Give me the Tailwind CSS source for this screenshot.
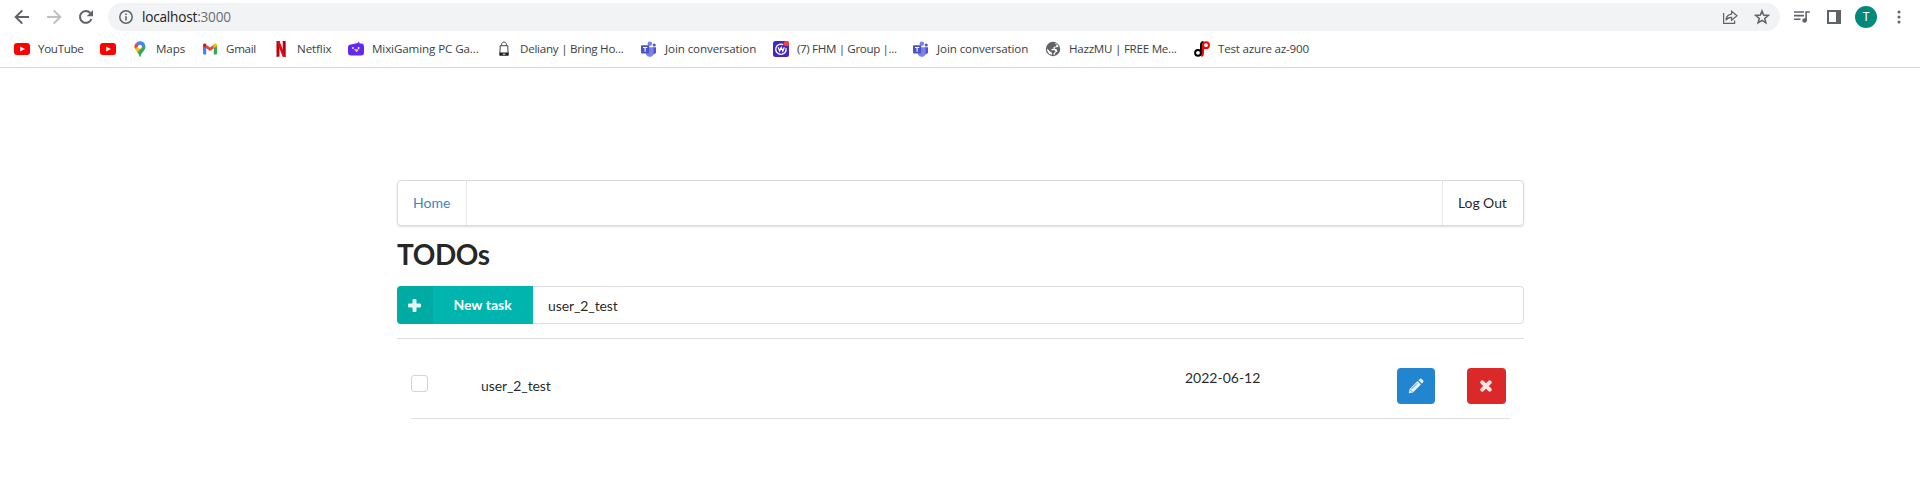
<!DOCTYPE html>
<html lang="en">
<head>
<meta charset="utf-8">
<title>TODOs</title>
<script src="https://cdn.jsdelivr.net/npm/@tailwindcss/browser@4"></script>
</head>
<body class="bg-white h-[477px] overflow-hidden font-['Lato',sans-serif] text-[14px] text-black/87">
<svg class="hidden">
  <symbol id="yt" viewBox="0 0 16 16"><rect y="2" width="16" height="12" rx="3" fill="#f00"/><path d="M6.2 5.4v5.2L11 8z" fill="#fff"/></symbol>
  <symbol id="teams" viewBox="0 0 16 16"><circle cx="13.2" cy="4" r="1.6" fill="#5059c9"/><path d="M11.5 6.3h3.5v5a2.4 2.4 0 0 1-3.5 1.6z" fill="#5059c9"/><circle cx="8.8" cy="2.8" r="2.3" fill="#7b83eb"/><path d="M5 6.3h7.6v5.2a4 4 0 0 1-7.6 2z" fill="#7b83eb"/><rect y="4.2" width="8.2" height="8.2" rx=".8" fill="#4b53bc"/><path d="M2 6.5h4.3M4.1 6.5v4.3" stroke="#fff" stroke-width="1.1"/></symbol>
</svg>

<header class="h-[68px] border-b border-[#d9dadc] font-['Open_Sans',sans-serif] text-[#3c4043]">
  <div class="flex items-center h-[31px] pt-[3px]">
    <svg class="ml-[14px] size-4" viewBox="0 0 16 16" fill="none" stroke="#5f6368" stroke-width="2"><path d="M15 8H2M8.3 1.4 1.7 8l6.6 6.6"/></svg>
    <svg class="ml-4 size-4" viewBox="0 0 16 16" fill="none" stroke="#bdbfc2" stroke-width="2"><path d="M1 8h13M7.7 1.4 14.3 8l-6.6 6.6"/></svg>
    <svg class="ml-4 size-4" viewBox="0 0 16 16"><path d="M13.4 10A5.9 5.9 0 1 1 12.3 4" fill="none" stroke="#5f6368" stroke-width="2"/><path d="M15 1v6.3H8.7z" fill="#5f6368"/></svg>
    <div class="ml-[14px] w-[1672px] h-7 rounded-full bg-[#f1f3f4] flex items-center">
      <svg class="ml-[11px] size-[14px]" viewBox="0 0 14 14" fill="none" stroke="#5f6368"><circle cx="7" cy="7" r="6.2" stroke-width="1.5"/><path d="M7 6.2v4.2M7 3.4v1.6" stroke-width="1.6"/></svg>
      <span class="ml-[9px] w-[90px] whitespace-nowrap text-[13.6px] tracking-[-0.2px] text-[#202124]">localhost<span class="text-[#6b6f74]">:3000</span></span>
      <svg class="ml-auto size-4" viewBox="0 0 16 16" fill="none" stroke="#5f6368" stroke-width="1.2"><path d="M1.6 4v10.4h11V11.5M9.6 5.1V2.2L15 6.8l-5.4 4.4V8.3C6.8 8.3 5 9.3 3.9 11.2c.3-3.5 2.2-5.6 5.7-6.1z"/></svg>
      <svg class="ml-4 mr-[10px] size-4" viewBox="0 0 16 16" fill="none" stroke="#5f6368" stroke-width="1.5"><path d="m8 2 1.6 4.1 4.7.3-3.6 3 1.2 4.5L8 11.4l-3.9 2.5 1.2-4.5-3.6-3 4.7-.3z"/></svg>
    </div>
    <svg class="ml-[14px] w-4 h-4" viewBox="0 0 16 16" fill="none" stroke="#5f6368" stroke-width="1.6"><path d="M0 3h10M0 6.6h10M0 10.3h6.5M12.1 12V3h3.7"/><circle cx="10.6" cy="11.5" r="2.3" fill="#5f6368" stroke="none"/></svg>
    <svg class="ml-[17px] w-[14px] h-[14px]" viewBox="0 0 14 14"><path d="M0 0h14v14H0zM2 2v10h7V2z" fill="#5f6368" fill-rule="evenodd"/></svg>
    <div class="ml-[14px] size-[22px] rounded-full bg-[#00897b] text-white text-[12px] flex items-center justify-center font-['Roboto',sans-serif]">T</div>
    <svg class="ml-[20px] w-1 h-[14px]" viewBox="0 0 4 14" fill="#5f6368"><circle cx="2" cy="2" r="1.5"/><circle cx="2" cy="7" r="1.5"/><circle cx="2" cy="12" r="1.5"/></svg>
  </div>
  <nav class="flex items-center h-[36px] pl-[14px] text-[11.6px] tracking-[-0.1px] whitespace-nowrap">
    <a class="flex items-center gap-2 w-[86px] tracking-[-0.3px]"><svg class="size-4"><use href="#yt"/></svg><span>YouTube</span></a>
    <a class="flex items-center w-8"><svg class="size-4"><use href="#yt"/></svg></a>
    <a class="flex items-center gap-2 w-[70px]"><svg class="size-4" viewBox="0 0 16 16"><path d="M8 .3a5.4 5.4 0 0 0-4.2 2L8 5.8l3.4-4.3A5.4 5.4 0 0 0 8 .3z" fill="#4285f4"/><path d="M3.8 2.3a5.3 5.3 0 0 0-.7 5.8L7 4.8z" fill="#ea4335"/><path d="M11.4 1.5 3.1 8.1c.5 1.2 1.4 2 2.2 3.2L13 3.7a5.4 5.4 0 0 0-1.6-2.2z" fill="#fbbc04"/><path d="M13 3.6 5.3 11.3C6.5 12.8 7 14 7.5 15.4q.5 1 1 0c.8-3 2.5-4.3 3.9-6.3 1.3-1.8 1.3-3.7.6-5.5z" fill="#34a853"/><path d="M8 .3c2 0 4 1 5 3.3L9.6 7 6.4 4.4 9.8.6z" fill="#4285f4"/><circle cx="8" cy="5.7" r="2" fill="#fff"/></svg><span>Maps</span></a>
    <a class="flex items-center gap-2 w-[71px] tracking-[-0.3px]"><svg class="size-4" viewBox="0 0 16 16"><path d="M1 4v8.5a1 1 0 0 0 1 1h2.2V6.6z" fill="#4285f4"/><path d="M15 4v8.5a1 1 0 0 1-1 1h-2.2V6.6z" fill="#34a853"/><path d="M4.2 7.2V3.7L8 6.6l3.8-2.9v3.5L8 10z" fill="#ea4335"/><path d="M1 5V4c0-1.6 1.7-2 2.6-1.2l.6.5v4z" fill="#c5221f"/><path d="M15 5V4c0-1.6-1.7-2-2.6-1.2l-.6.5v4z" fill="#fbbc04"/></svg><span>Gmail</span></a>
    <a class="flex items-center gap-2 w-[75px]"><svg class="size-4" viewBox="0 0 16 16"><path d="M3.5 0h3v15.6l-3 .4zM9.7 0h3v16l-3-.4z" fill="#b1060f"/><path d="M3.5 0h3l6.2 16-3.1-.4z" fill="#e50914"/></svg><span>Netflix</span></a>
    <a class="flex items-center gap-2 w-[148px]"><svg class="size-4" viewBox="0 0 16 16"><path d="M3 3.5 9.5 2 11 .5l.6 2H14q2 .5 2 3v6q0 3-3 3H3q-3 0-3-3v-5q0-3 3-3z" fill="#6229f5"/><circle cx="5" cy="7" r=".9" fill="#fff"/><circle cx="10.6" cy="7" r=".9" fill="#fff"/><path d="M5.8 8.5 8 8l3 .7-2.4 2.6z" fill="#ffc928"/></svg><span>MixiGaming PC Ga...</span></a>
    <a class="flex items-center gap-2 w-[145px] tracking-[-0.25px]"><svg class="size-4" viewBox="0 0 16 16"><path d="M5.6 5V3.5C5.6.2 10.4.2 10.4 3.5V5" fill="none" stroke="#444"/><path d="M4.2 4.7h7.6l.3 9H3.9z" fill="#fff" stroke="#444"/><path d="M3.5 11.6h9l.1 3.2H3.4z" fill="#222"/><path d="M6.8 13.2h2.5" stroke="#fff"/></svg><span>Deliany | Bring Ho...</span></a>
    <a class="flex items-center gap-2 w-[132px]"><svg class="size-4"><use href="#teams"/></svg><span>Join conversation</span></a>
    <a class="flex items-center gap-2 w-[140px] tracking-[-0.35px]"><svg class="size-4" viewBox="0 0 16 16"><rect width="16" height="16" rx="2.5" fill="#4326c4"/><path d="M10.2 3.6A5.2 5.2 0 1 0 13 7.2M9 13q3.5-.2 4.1-4" fill="none" stroke="#fff" stroke-width="1.3"/><path d="m5.2 6.3 1.4 3.8L8.2 6.5l1.6 3.6 1.5-3.8" fill="none" stroke="#fff" stroke-width="1.2"/><circle cx="13.4" cy="2.6" r="2.7" fill="#fa3e3e"/></svg><span>(7) FHM | Group |...</span></a>
    <a class="flex items-center gap-2 w-[132px]"><svg class="size-4"><use href="#teams"/></svg><span>Join conversation</span></a>
    <a class="flex items-center gap-2 w-[149px] tracking-[-0.25px]"><svg class="size-4" viewBox="0 0 16 16"><circle cx="8" cy="8" r="7.2" fill="#5f6368"/><path d="M9.3 2.4 12 3.6 10.8 5.4 8.6 6v1.8L6.4 8v1.3h3.2l.8 1.5-1.8 1.4v1.9l-1.5-.3-.2-2.1-2.1-1.4L2.1 7.5l.1 2.2 2 3.2 3.5 1.2 1.9-.3 1-2.4 1.9-1-1-2.2-2.1-.6.7-1.2 3.4-.5-.6-1.9-1.7-1.7z" fill="#fff"/></svg><span>HazzMU | FREE Me...</span></a>
    <a class="flex items-center gap-2 tracking-[-0.2px]"><svg class="size-4" viewBox="0 0 16 16" fill="none" stroke-width="2"><circle cx="4" cy="11.8" r="2.9" stroke="#000"/><path d="M7 14.5V4q.1-2.8 2.5-3" stroke="#000"/><circle cx="12" cy="4.2" r="2.9" stroke="#f00"/><path d="M9 4v8.5q0 2-1.7 2.5" stroke="#f00"/></svg><span>Test azure az-900</span></a>
  </nav>
</header>

<main class="ml-[397px] w-[1127px] pt-[112px]">
  <nav class="flex h-[46px] rounded-[4px] border border-[#d9dadb] shadow-[0_1px_2px_0_rgba(34,36,38,0.15)]">
    <a class="flex items-center w-[69px] pl-[15px] pb-[2px] border-r border-[#e6e6e7] text-[#4183c4]">Home</a>
    <a class="ml-auto flex items-center w-[81px] pl-[15px] pb-[2px] border-l border-[#e6e6e7] tracking-[-0.08px]">Log Out</a>
  </nav>
  <h1 class="mt-[10px] h-9 leading-9 text-[28px] font-bold tracking-[-0.4px]">TODOs</h1>
  <div class="mt-[14px] flex h-[38px]">
    <button class="flex w-[136px] rounded-l-[4px] overflow-hidden bg-[#00b5ad] text-white font-bold">
      <span class="flex items-center justify-center w-9 h-full pr-px bg-black/5"><svg class="w-[13px] h-[13px]" viewBox="0 0 13 13"><path d="M4.5 1q0-1 1-1h2q1 0 1 1v3.5H12q1 0 1 1v2q0 1-1 1H8.5V12q0 1-1 1h-2q-1 0-1-1V8.5H1q-1 0-1-1v-2q0-1 1-1h3.500z" fill="#fff" fill-opacity=".88"/></svg></span>
      <span class="flex-1 self-center pb-[2px] pr-px">New task</span>
    </button>
    <div class="flex-1 flex items-center pl-[15px] border border-l-0 border-[#dededf] rounded-r-[4px] pt-px tracking-[-0.1px]">user_2_test</div>
  </div>
  <div class="mt-[14px] border-t border-[#dedede]"></div>
  <div class="mx-[14px] h-[80px] flex items-start border-b border-[#dedede]">
    <span class="mt-[36px] size-[17px] rounded-[3px] border border-[#d4d4d5]"></span>
    <span class="ml-[53px] mt-[37px] leading-5 w-[704px] tracking-[-0.1px]">user_2_test</span>
    <span class="mt-[29px] leading-5 w-[212px]">2022-06-12</span>
    <button class="mt-[29px] w-[38px] h-9 rounded-[4px] bg-[#2185d0] flex items-center justify-center"><svg class="size-4" viewBox="0 0 16 16" fill="#fff" fill-opacity=".88"><path d="m9.500 3.100 3.400 3.400L5 14.400l-4.300.9.900-4.300zM10.400 2.200 11.700.9q1-.8 2 0l1.400 1.400q.8 1 0 2l-1.300 1.300z"/><path d="m3.500 11 5.800-5.800M2.200 11.800l2 2" stroke="#2185d0" stroke-width=".8"/></svg></button>
    <button class="ml-8 mt-[29px] w-[39px] h-9 rounded-[4px] bg-[#db2828] flex items-center justify-center pr-px"><svg class="size-3" viewBox="0 0 12 12"><path d="m2.300 2.300 7.400 7.400M9.700 2.300l-7.400 7.400" stroke="#fff" stroke-opacity=".88" stroke-width="4" stroke-linecap="round"/></svg></button>
  </div>
</main>
</body>
</html>
